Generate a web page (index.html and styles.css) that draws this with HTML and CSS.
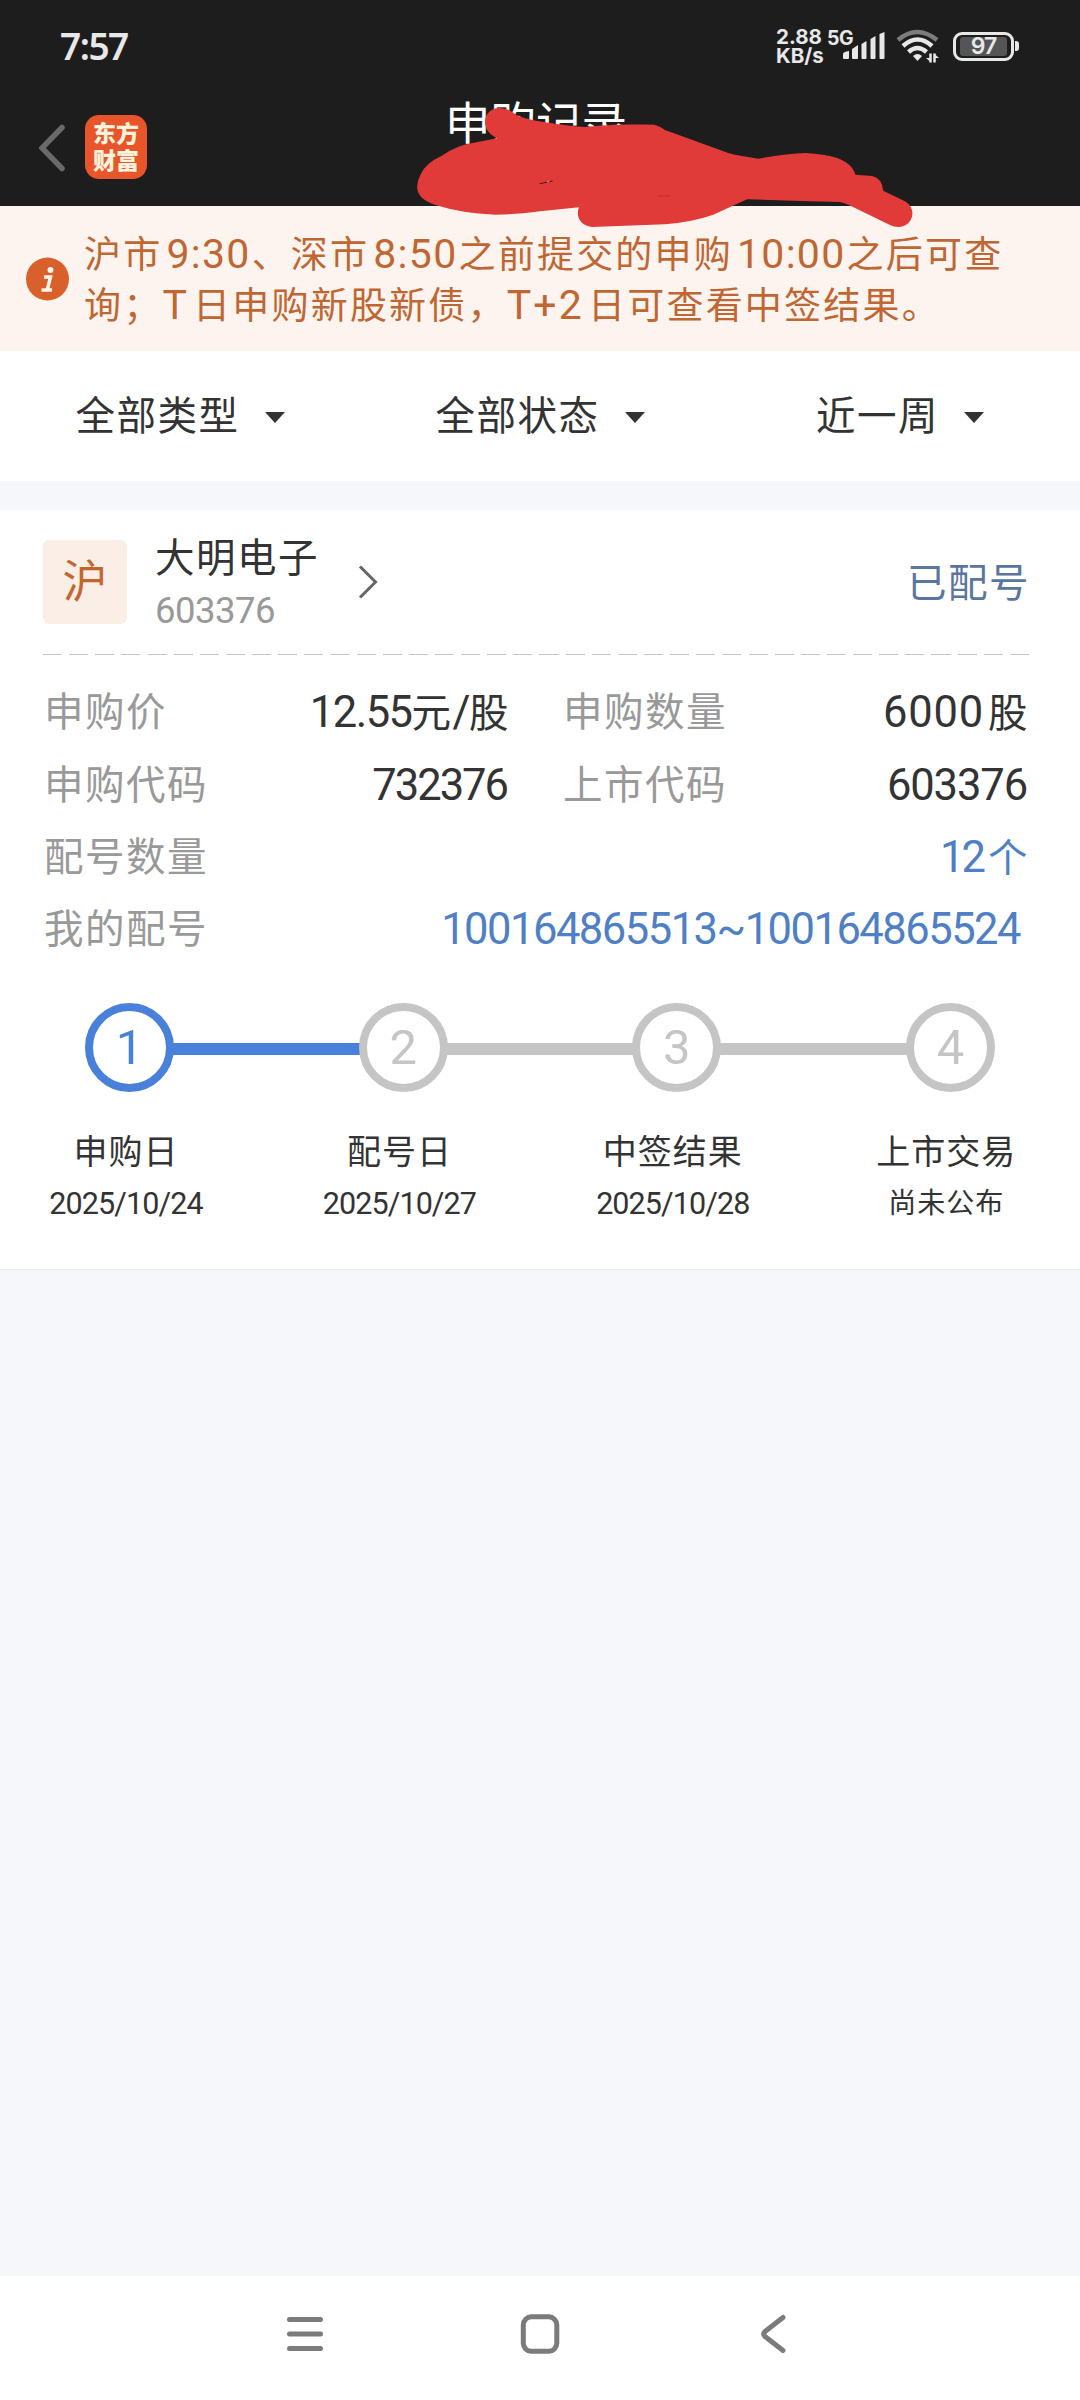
FILE: index.html
```html
<!DOCTYPE html>
<html lang="zh-CN">
<head>
<meta charset="utf-8">
<title>申购记录</title>
<link rel="stylesheet" href="styles.css">
</head>
<body>
<header class="top">
  <div class="status">
    <span class="clock">7:57</span>
    <div class="speed"><span>2.88</span><span>KB/s</span></div>
    <span class="net">5G</span>
    <svg class="signal" width="42" height="28" viewBox="0 0 42 28" fill="#e8e8e8">
      <path d="M0 22q0-2 6-3v7q0 1-1 1H1q-1 0-1-1zM9 17l6-4v13q0 1-1 1h-4q-1 0-1-1zM18.500 12l5-3v17q0 1-1 1h-3q-1 0-1-1zM27.500 7l5-3v22q0 1-1 1h-3q-1 0-1-1zM36.500 2l5-2v26q0 1-1 1h-3q-1 0-1-1z"/>
    </svg>
    <svg class="wifi" width="44" height="34" viewBox="0 0 44 34" fill="none">
      <path d="M2 11Q21 -5 41 11" stroke="#7c7c7c" stroke-width="4.500"/>
      <path d="M7 17Q21.500 4 36 17M12.500 23Q21.500 15 30.500 23" stroke="#e8e8e8" stroke-width="4.500"/>
      <path d="M17 27Q21.500 23 26 27L21.500 32Z" fill="#e8e8e8"/>
      <path d="M34.500 24.500v9M38.500 33.500v-9" stroke="#e8e8e8" stroke-width="2.500"/>
      <path d="M35 33.500l-5-4.500h5zM38 24.500l5 4.500h-5z" fill="#e8e8e8"/>
    </svg>
    <div class="battery"><span>97</span></div>
    <i class="nub"></i>
  </div>
  <div class="titlebar">
    <svg class="back" width="28" height="48" viewBox="0 0 28 48" fill="none" stroke="#6a6a6a" stroke-width="5.500" stroke-linecap="round"><path d="M23 3.500 3 24 23 44.500"/></svg>
    <div class="logo"><span>东方</span><span>财富</span></div>
    <h1>申购记录</h1>
  </div>
  <svg class="scribble" width="560" height="160" viewBox="0 0 1568 480" preserveAspectRatio="none">
    <path fill="#e03a39" d="M266 125C266 100 285 84 305 84C325 84 340 92 352 104C375 118 450 132 545 141C600 134 660 132 740 134Q755 138 770 150L930 212Q950 221 965 224L1032 236Q1110 221 1165 219Q1215 222 1250 233Q1295 250 1303 284L1350 288Q1378 295 1381 332L1442 364Q1463 378 1463 402C1460 430 1440 441 1424 441Q1410 441 1400 435L1285 375Q1270 367 1258 366L1150 363L1000 358L905 404Q850 425 770 433L565 441C540 438 526 420 526 400Q526 390 529 382L420 394Q350 404 295 404Q200 400 130 376C90 362 76 345 76 318Q77 300 86 283Q98 250 145 227Q185 196 235 188L300 175C275 160 266 145 266 125Z"/>
    <path d="M419 311l36-8" stroke="#5a1515" stroke-width="3"/><path d="M440 306l6-2" stroke="#fff" stroke-width="2"/>
    <path d="M750 349l36-2" stroke="#b02c2c" stroke-width="2"/>
  </svg>
</header>
<section class="notice">
  <svg width="44" height="44" viewBox="0 0 44 44"><circle cx="22.500" cy="22" r="21.500" fill="#d9602a"/><circle cx="25.500" cy="13" r="3" fill="#fff5ee"/><path d="M19 20h6.500L22.500 32M16.500 33h10.500" fill="none" stroke="#fff5ee" stroke-width="3.500"/></svg>
  <p>沪市<b class="t1">9:30</b>、深市<b class="t1">8:50</b>之前提交的申购<b class="t1">10:00</b>之后可查<br>询；<b class="t2">T</b>日申购新股新债，<b class="t2">T+2</b>日可查看中签结果。</p>
</section>
<nav class="filters">
  <div>全部类型<i></i></div><div>全部状态<i></i></div><div>近一周<i></i></div>
</nav>
<main class="card">
  <div class="stock">
    <span class="market">沪</span>
    <div class="name"><span>大明电子</span><span class="code">603376</span></div>
    <svg class="more" width="22" height="36" viewBox="0 0 22 36" fill="none" stroke="#666" stroke-width="3"><path d="M2 2.500 17.500 18 2 33.500"/></svg>
    <span class="state">已配号</span>
  </div>
  <div class="dash"></div>
  <dl class="info">
    <div><dt>申购价</dt><dd><b>12.55</b>元<b>/</b>股</dd></div>
    <div><dt>申购数量</dt><dd><b class="wide">6000</b>股</dd></div>
    <div><dt>申购代码</dt><dd><b class="last">732376</b></dd></div>
    <div><dt>上市代码</dt><dd><b class="last far">603376</b></dd></div>
    <div class="full blue"><dt>配号数量</dt><dd><b class="pair">12</b>个</dd></div>
    <div class="full blue range"><dt>我的配号</dt><dd><b>100164865513~100164865524</b></dd></div>
  </dl>
  <div class="track">
    <span class="dot on">1</span><i class="on"></i><span class="dot">2</span><i></i><span class="dot">3</span><i></i><span class="dot">4</span>
  </div>
  <div class="steps">
    <div><span>申购日</span><b>2025/10/24</b></div>
    <div><span>配号日</span><b>2025/10/27</b></div>
    <div><span>中签结果</span><b>2025/10/28</b></div>
    <div><span>上市交易</span><em>尚未公布</em></div>
  </div>
</main>
<footer class="sysnav">
  <svg width="44" height="44" viewBox="0 0 44 44"><path d="M6.500 7.500h31M6.500 22h31M6.500 36.500h31"/></svg>
  <svg width="44" height="44" viewBox="0 0 44 44"><rect x="5.300" y="4.800" width="33.500" height="34.500" rx="8"/></svg>
  <svg width="44" height="44" viewBox="0 0 44 44"><path d="M30 5.500 12 19.500Q9.500 22 12 24.500L30 38.500"/></svg>
</footer>
</body>
</html>
```
FILE: styles.css
```css
* { box-sizing: border-box; margin: 0; padding: 0; }
body {
  width: 1080px; height: 2400px; display: flex; flex-direction: column;
  background: #f6f7fa; color: #333;
  font: 400 40px/1 Roboto, "Noto Sans CJK SC", sans-serif;
}
b { font-weight: 400; }
i, em { font-style: normal; }

.top { position: relative; height: 206px; background: #1d1d1d; }
.status { display: flex; height: 92px; padding: 0 61px 0 60px; color: #e8e8e8; align-items: center; }
.clock { font: 600 37px/90px "Noto Sans", sans-serif; letter-spacing: -1.500px; margin-right: auto; }
.speed { display: flex; flex-direction: column; width: 51px; font: 700 20.500px/19px Inter, sans-serif; }
.net { font: 700 19.500px/38px Inter, sans-serif; width: 28px; height: 54px; margin-right: -12px; letter-spacing: -.5px; }
.signal { margin-right: 11px; }
.wifi { margin-right: 13px; }
.battery { width: 61px; height: 29px; border: 3px solid #e8e8e8; border-radius: 9px; padding: 2px 4px; }
.battery span { display: block; height: 19px; background: #555; border-radius: 3px; text-align: center; font: 600 23px/19px Inter, sans-serif; letter-spacing: -1px; }
.nub { width: 4px; height: 10px; margin-left: 1px; background: #e8e8e8; border-radius: 0 3px 3px 0; }
.titlebar { display: grid; grid-template-columns: 28px 62px 1fr; column-gap: 18px; padding-left: 39px; }
.back { margin-top: 32px; }
.logo { margin-top: 23px; height: 64px; border-radius: 14px; background: #e8552a; color: #fff3dc; display: flex; flex-direction: column; align-items: center; padding-top: 4px; font: 900 23px/27px "Noto Sans CJK SC", sans-serif; }
.titlebar h1 { color: #fff; font-size: 45.500px; font-weight: 400; line-height: 66px; padding-left: 280px; }
.scribble { position: absolute; left: 390px; top: 80px; }

.notice { height: 145px; background: #fdf4f0; color: #bf6632; display: flex; align-items: center; padding-left: 25px; gap: 15px; }
.notice p { font-size: 37px; line-height: 51.300px; letter-spacing: 2.200px; white-space: nowrap; padding-top: 5px; }
.notice b { font-size: 41px; line-height: 1; }
.t1 { margin: 0 1px 0 4px; letter-spacing: 1.300px; }
.t2 { margin-right: 4px; }

.filters { height: 130px; background: #fff; display: grid; grid-template-columns: repeat(3, 360px); }
.filters div { display: flex; align-items: center; justify-content: center; font-size: 39.500px; letter-spacing: 1.500px; padding-top: 2px; }
.filters i { margin-left: 25px; border: 10px solid transparent; border-top: 11px solid #333; border-bottom: 0; }

.card { margin-top: 29px; height: 760px; background: #fff; border-bottom: 1px solid #e8eaed; }
.stock { height: 144px; padding: 0 50px 0 43px; display: flex; align-items: center; }
.market { width: 84px; height: 84px; border-radius: 6px; background: #faeee7; color: #c4652f; font-size: 45px; line-height: 86px; text-align: center; }
.name { display: flex; flex-direction: column; margin-left: 28px; width: 203px; font-size: 39.500px; line-height: 52px; letter-spacing: 1.500px; padding-top: 6px; }
.code { font-size: 36.500px; color: #999; letter-spacing: -.5px; }
.state { margin-left: auto; color: #5a76a0; font-size: 39.500px; letter-spacing: 1.500px; padding-top: 3px; }
.dash { height: 1px; margin: 0 51px 0 43px; background: repeating-linear-gradient(90deg, #c5c5c5 0 19.100px, transparent 19.100px 26.130px); }
.info { margin: 22px 52px 0 44px; display: grid; grid-template-columns: 465px 465px; column-gap: 54px; grid-auto-rows: 72.200px; }
.info div { display: flex; justify-content: space-between; align-items: center; font-size: 39.500px; letter-spacing: 1.500px; }
.info .full { grid-column: 1 / 3; }
.info dt { color: #999; }
.info dd { margin-right: -1px; }
.info b { font-size: 43.500px; letter-spacing: -1.500px; }
.info .wide { letter-spacing: .8px; margin-right: 4px; }
.info .last { margin-right: 3px; letter-spacing: -2px; }
.info .far { letter-spacing: -1.100px; margin-right: 2px; }
.info .pair { letter-spacing: -3px; margin-right: 5px; }
.blue dd { color: #4f7fc5; }
.info .range dd { margin-right: 8px; }
.track { margin: 37px 85px 0; display: flex; align-items: center; }
.dot { width: 89px; height: 89px; border: 8.500px solid #c5c5c5; border-radius: 50%; color: #c5c5c5; font-size: 49px; line-height: 73px; text-align: center; }
.track i { flex: 1; height: 12px; background: #c5c5c5; margin: 3px -2px 0; }
.track .on { border-color: #4980d9; color: #4980d9; }
.track i.on { background: #4980d9; }
.steps { margin: 35px 0 0 16px; display: grid; grid-template-columns: repeat(4, 220px); column-gap: 53.400px; text-align: center; }
.steps div { display: flex; flex-direction: column; line-height: 51px; }
.steps span { font-size: 34px; letter-spacing: 1px; }
.steps b { font-size: 30.500px; letter-spacing: -.9px; }
.steps em { font-size: 28px; letter-spacing: 1px; }

.sysnav { margin-top: auto; height: 124px; background: #fff; display: flex; align-items: center; justify-content: center; gap: 191px; padding-bottom: 8px; }
.sysnav svg { fill: none; stroke: #7b7b7b; stroke-width: 5; stroke-linecap: round; stroke-linejoin: round; }
```
